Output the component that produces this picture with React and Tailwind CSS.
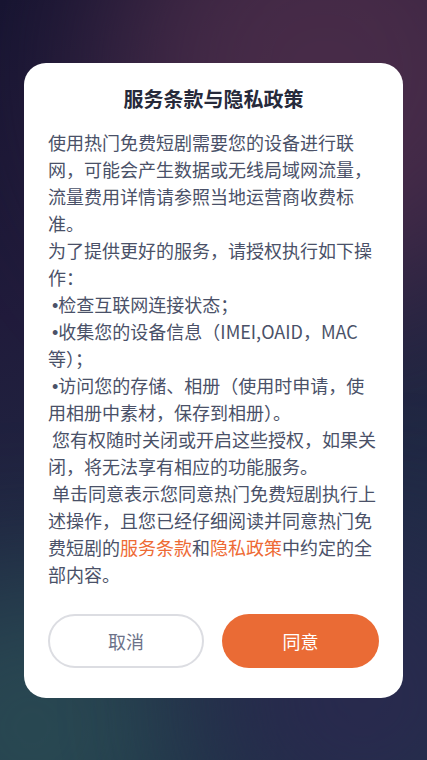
const Dot = () => (
  <span className="leading-[0]" style={{ fontFamily: '"Liberation Sans", sans-serif' }}>•</span>
);

export default function App() {
  const font = { fontFamily: '"Noto Sans CJK SC", "Noto Sans", sans-serif' };
  return (
    <div
      className="relative w-full h-[760px] overflow-hidden bg-[#1c2140] flex flex-col items-center pt-[63px]"
      style={font}
    >
      {/* backdrop blobs */}
      <div className="absolute inset-0 bg-[linear-gradient(160deg,#141330_0%,#201b3b_35%,#1f2a44_70%,#1c3446_100%)]" />
      <div className="absolute -top-40 -right-32 w-[460px] h-[460px] rounded-full bg-[#5a3450] opacity-70 blur-[80px]" />
      <div className="absolute -bottom-32 -left-32 w-[320px] h-[320px] rounded-full bg-[#2e5458] opacity-70 blur-[70px]" />
      <div className="absolute -bottom-24 -right-24 w-[320px] h-[320px] rounded-full bg-[#2c2850] opacity-80 blur-[70px]" />

      <div className="relative w-[379px] bg-white rounded-[22px] px-6 pt-[22px] pb-[30px]">
        <h1 className="text-center text-[20px] leading-[28px] font-bold text-[#262a3b]">
          服务条款与隐私政策
        </h1>
        <p className="mt-[16px] text-[18px] leading-[27px] text-[#4a5168] whitespace-pre-wrap break-all">
          {"使用热门免费短剧需要您的设备进行联网，可能会产生数据或无线局域网流量，流量费用详情请参照当地运营商收费标准。\n为了提供更好的服务，请授权执行如下操作：\n "}
          <Dot />
          {"检查互联网连接状态；\n "}
          <Dot />
          {"收集您的设备信息（IMEI,OAID，MAC等）；\n "}
          <Dot />
          {"访问您的存储、相册（使用时申请，使用相册中素材，保存到相册）。\n 您有权随时关闭或开启这些授权，如果关闭，将无法享有相应的功能服务。\n 单击同意表示您同意热门免费短剧执行上述操作，且您已经仔细阅读并同意热门免费短剧的"}
          <span className="text-[#ee6a34]">服务条款</span>和
          <span className="text-[#ee6a34]">隐私政策</span>中约定的全部内容。
        </p>
        <div className="mt-[26px] flex gap-[18px]">
          <button className="w-[156px] h-[54px] rounded-full border-2 border-[#dcdde2] bg-white text-[18px] text-[#6c7289]">
            取消
          </button>
          <button className="flex-1 h-[54px] rounded-full bg-[#ea6b35] text-[18px] text-white">
            同意
          </button>
        </div>
      </div>
    </div>
  );
}
